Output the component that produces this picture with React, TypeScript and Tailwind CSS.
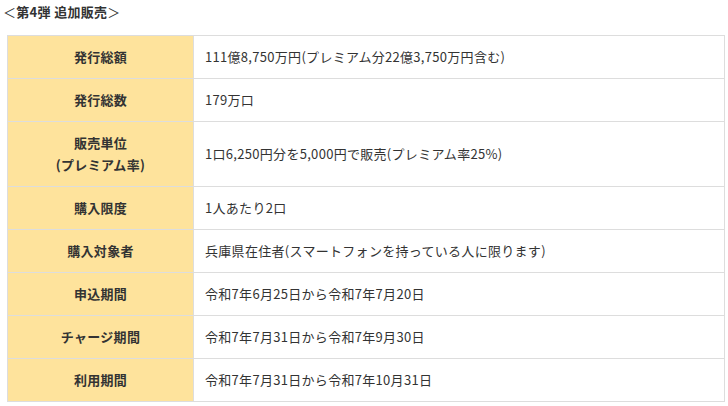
const rows: { label: React.ReactNode; value: string }[] = [
  { label: "発行総額", value: "111億8,750万円(プレミアム分22億3,750万円含む)" },
  { label: "発行総数", value: "179万口" },
  {
    label: (
      <>
        販売単位
        <br />
        (プレミアム率)
      </>
    ),
    value: "1口6,250円分を5,000円で販売(プレミアム率25%)",
  },
  { label: "購入限度", value: "1人あたり2口" },
  { label: "購入対象者", value: "兵庫県在住者(スマートフォンを持っている人に限ります)" },
  { label: "申込期間", value: "令和7年6月25日から令和7年7月20日" },
  { label: "チャージ期間", value: "令和7年7月31日から令和7年9月30日" },
  { label: "利用期間", value: "令和7年7月31日から令和7年10月31日" },
]

export default function App() {
  return (
    <div
      className="w-[728px] h-[406px] bg-white text-[#333] overflow-hidden tracking-[0.3px]"
      style={{ fontFamily: '"Noto Sans CJK JP", "Noto Sans", sans-serif' }}
    >
      <p className="pl-[3px] pt-[1px] text-[13px] leading-[22px]">
        ＜<span className="font-bold">第4弾 追加販売</span>＞
      </p>
      <table className="mt-[12px] ml-[7px] w-[718px] border-collapse text-[13px] leading-[22px]">
        <tbody>
          {rows.map((r, i) => (
            <tr key={i}>
              <th className="w-[186px] border border-[#dddddd] bg-[#fee39c] py-[10px] text-center font-bold">
                {r.label}
              </th>
              <td className="border border-[#dddddd] px-[11px] py-[10px] text-left">{r.value}</td>
            </tr>
          ))}
        </tbody>
      </table>
    </div>
  )
}
